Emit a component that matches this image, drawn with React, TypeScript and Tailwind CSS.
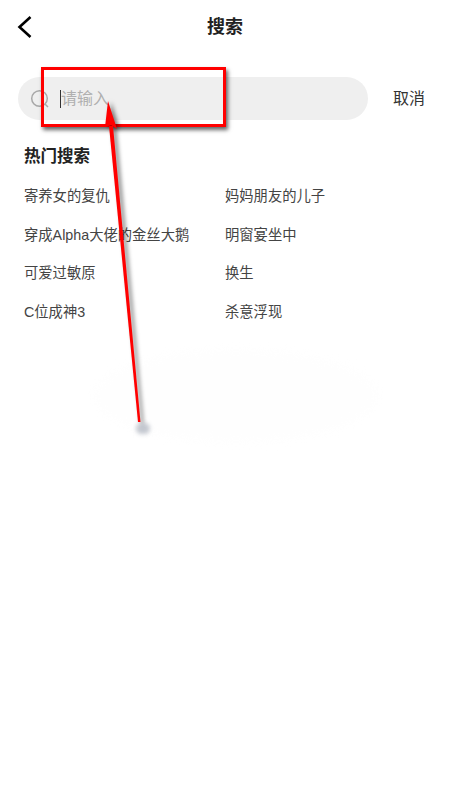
// App.tsx — pantalla de búsqueda con la anotación roja encima
const FONT = "font-['Liberation_Sans','Noto_Sans_CJK_SC',sans-serif]";

const HOT_SEARCHES = [
  "寄养女的复仇",
  "妈妈朋友的儿子",
  "穿成Alpha大佬的金丝大鹅",
  "明窗宴坐中",
  "可爱过敏原",
  "换生",
  "C位成神3",
  "杀意浮现",
];

export default function App() {
  return (
    <div className={`relative w-[450px] h-[800px] overflow-hidden bg-white ${FONT}`}>
      <header className="relative flex items-center justify-center h-[54px]">
        <svg
          className="absolute left-[14px] top-[13px]"
          width="20"
          height="28"
          viewBox="0 0 20 28"
          fill="none"
        >
          <path d="M16.5 4 L5.5 14 L16.5 24" stroke="#000" strokeWidth="2.6" />
        </svg>
        <h1 className="text-[18px] font-bold text-[#222]">搜索</h1>
      </header>

      <div className="flex items-center mt-[23px] pl-[18px]">
        <div className="flex items-center w-[350px] h-[43px] rounded-full bg-[#efefef] pl-[12px]">
          <svg width="20" height="20" viewBox="0 0 20 20" fill="none" className="text-[#a8a8a8]">
            <circle cx="9.5" cy="9.5" r="7.8" stroke="currentColor" strokeWidth="1.5" />
            <path d="M15 15l3 3" stroke="currentColor" strokeWidth="1.5" />
          </svg>
          <span className="w-px h-[18px] bg-[#333] ml-[10px]" />
          <span className="text-[16px] text-[#b0b0b0]">请输入</span>
        </div>
        <span className="ml-[25px] text-[16px] text-[#333]">取消</span>
      </div>

      <section className="px-[24px] mt-[25px]">
        <h2 className="text-[16.5px] leading-[22px] font-bold text-[#222]">热门搜索</h2>
        <div className="grid grid-cols-[201px_1fr] mt-[19px] gap-y-[18.5px]">
          {HOT_SEARCHES.map((name) => (
            <span key={name} className="text-[14.3px] leading-[20px] text-[#444]">
              {name}
            </span>
          ))}
        </div>
      </section>

      {/* anotación: mancha borrada, recuadro y flecha */}
      <div className="absolute left-[94px] top-[350px] w-[284px] h-[92px] rounded-[50%] bg-[#fefefe] blur-[4px]" />
      <div className="absolute left-[41px] top-[67px] w-[185px] h-[60px] border-[3.5px] border-[#ff0000] shadow-[2px_3px_4px_rgba(0,0,0,0.6)]" />
      <div className="absolute left-[136px] top-[423px] w-[14px] h-[11px] rounded-full bg-[#c4c8d0] blur-[2px]" />
      <svg
        className="absolute left-0 top-0 [filter:drop-shadow(3px_1px_2px_rgba(0,0,0,0.5))]"
        width="450"
        height="800"
        viewBox="0 0 450 800"
        fill="none"
      >
        <path d="M109 126 L113 126 L140.5 422 L138 422 Z" fill="#ff0000" />
        <path d="M108 101 L117 129 L111 125 L105 127 Z" fill="#ff0000" />
      </svg>
    </div>
  );
}
